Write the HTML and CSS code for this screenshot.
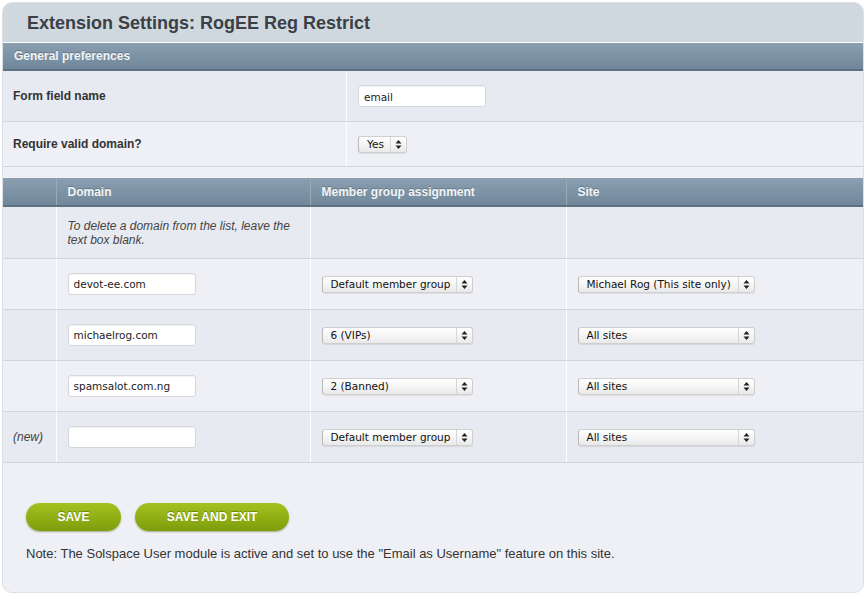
FILE: index.html
```html
<!DOCTYPE html>
<html>
<head>
<meta charset="utf-8">
<title>Extension Settings: RogEE Reg Restrict</title>
<link rel="stylesheet" href="styles.css">
</head>
<body>
<div class="panel">
  <h1 class="title">Extension Settings: RogEE Reg Restrict</h1>
  <div class="section-bar">General preferences</div>

  <div class="pref-row shade">
    <div class="pref-label">Form field name</div>
    <div class="pref-value"><input class="text-input" type="text" value="email"></div>
  </div>
  <div class="pref-row pref-row-short">
    <div class="pref-label">Require valid domain?</div>
    <div class="pref-value">
      <div class="select sel-yes"><span class="sel-text">Yes</span><span class="sel-arrows"><svg width="7" height="9" viewBox="0 0 7 9"><path d="M3.5 0L6.5 3.5H0.5Z M3.5 9L6.5 5.5H0.5Z" fill="#222"/></svg></span></div>
    </div>
  </div>

  <div class="spacer"></div>

  <table class="domains">
    <thead>
      <tr>
        <th class="c-idx"></th>
        <th class="c-domain">Domain</th>
        <th class="c-group">Member group assignment</th>
        <th class="c-site">Site</th>
      </tr>
    </thead>
    <tbody>
      <tr class="shade help-row">
        <td></td>
        <td class="help">To delete a domain from the list, leave the text box blank.</td>
        <td></td>
        <td></td>
      </tr>
      <tr>
        <td></td>
        <td><input class="text-input" type="text" value="devot-ee.com"></td>
        <td><div class="select sel-group"><span class="sel-text">Default member group</span><span class="sel-arrows"><svg width="7" height="9" viewBox="0 0 7 9"><path d="M3.5 0L6.5 3.5H0.5Z M3.5 9L6.5 5.5H0.5Z" fill="#222"/></svg></span></div></td>
        <td><div class="select sel-site"><span class="sel-text">Michael Rog (This site only)</span><span class="sel-arrows"><svg width="7" height="9" viewBox="0 0 7 9"><path d="M3.5 0L6.5 3.5H0.5Z M3.5 9L6.5 5.5H0.5Z" fill="#222"/></svg></span></div></td>
      </tr>
      <tr class="shade">
        <td></td>
        <td><input class="text-input" type="text" value="michaelrog.com"></td>
        <td><div class="select sel-group"><span class="sel-text">6 (VIPs)</span><span class="sel-arrows"><svg width="7" height="9" viewBox="0 0 7 9"><path d="M3.5 0L6.5 3.5H0.5Z M3.5 9L6.5 5.5H0.5Z" fill="#222"/></svg></span></div></td>
        <td><div class="select sel-site"><span class="sel-text">All sites</span><span class="sel-arrows"><svg width="7" height="9" viewBox="0 0 7 9"><path d="M3.5 0L6.5 3.5H0.5Z M3.5 9L6.5 5.5H0.5Z" fill="#222"/></svg></span></div></td>
      </tr>
      <tr>
        <td></td>
        <td><input class="text-input" type="text" value="spamsalot.com.ng"></td>
        <td><div class="select sel-group"><span class="sel-text">2 (Banned)</span><span class="sel-arrows"><svg width="7" height="9" viewBox="0 0 7 9"><path d="M3.5 0L6.5 3.5H0.5Z M3.5 9L6.5 5.5H0.5Z" fill="#222"/></svg></span></div></td>
        <td><div class="select sel-site"><span class="sel-text">All sites</span><span class="sel-arrows"><svg width="7" height="9" viewBox="0 0 7 9"><path d="M3.5 0L6.5 3.5H0.5Z M3.5 9L6.5 5.5H0.5Z" fill="#222"/></svg></span></div></td>
      </tr>
      <tr class="shade">
        <td class="new-label">(new)</td>
        <td><input class="text-input" type="text" value=""></td>
        <td><div class="select sel-group"><span class="sel-text">Default member group</span><span class="sel-arrows"><svg width="7" height="9" viewBox="0 0 7 9"><path d="M3.5 0L6.5 3.5H0.5Z M3.5 9L6.5 5.5H0.5Z" fill="#222"/></svg></span></div></td>
        <td><div class="select sel-site"><span class="sel-text">All sites</span><span class="sel-arrows"><svg width="7" height="9" viewBox="0 0 7 9"><path d="M3.5 0L6.5 3.5H0.5Z M3.5 9L6.5 5.5H0.5Z" fill="#222"/></svg></span></div></td>
      </tr>
    </tbody>
  </table>

  <div class="actions">
    <button class="btn btn-save" type="button">SAVE</button>
    <button class="btn btn-exit" type="button">SAVE AND EXIT</button>
  </div>
  <p class="note">Note: The Solspace User module is active and set to use the "Email as Username" feature on this site.</p>
</div>
</body>
</html>
```

FILE: styles.css
```css
* { box-sizing: border-box; }

html, body {
  margin: 0;
  padding: 0;
  background: #ffffff;
}

body {
  font-family: "Liberation Sans", Arial, Helvetica, sans-serif;
  color: #333;
}

.panel {
  margin: 2px;
  width: 862px;
  height: 591px;
  background: #eff0f5;
  border: 1px solid #dcdfe4;
  border-radius: 10px;
  overflow: hidden;
}

.title {
  margin: 0;
  height: 40px;
  padding: 10px 0 0 24px;
  background: #d0d8df;
  border-bottom: 1px solid #ffffff;
  font-size: 18px;
  font-weight: bold;
  color: #3a4046;
  line-height: 20px;
}

.section-bar {
  height: 28px;
  padding: 0 0 0 11px;
  background: linear-gradient(#8aa0b1, #70869a);
  border-bottom: 2px solid #5e707d;
  color: #f2f5f7;
  font-size: 12px;
  font-weight: bold;
  line-height: 27px;
  text-shadow: 0 -1px 0 rgba(40, 55, 65, 0.35);
}

.pref-row {
  display: flex;
  height: 51px;
  border-bottom: 1px solid #d3d6dd;
  background: #eff0f5;
}

.pref-row.shade { background: #e8eaf2; }

.pref-row-short { height: 45px; }

.pref-label {
  width: 344px;
  display: flex;
  align-items: center;
  padding-left: 10px;
  border-right: 1px solid #ffffff;
  font-size: 12px;
  font-weight: bold;
  color: #333;
}

.pref-value {
  display: flex;
  align-items: center;
  padding-left: 11px;
}

.spacer { height: 11px; }

.text-input {
  width: 128px;
  height: 22px;
  margin: 0;
  padding: 1px 5px 0;
  background: #ffffff;
  border: 1px solid #d4d7dc;
  border-radius: 3px;
  box-shadow: inset 0 1px 1px rgba(0, 0, 0, 0.05);
  font-family: "DejaVu Sans", "Lucida Grande", sans-serif;
  font-size: 10.5px;
  color: #222;
  outline: none;
}

.select {
  display: inline-flex;
  align-items: center;
  height: 17px;
  background: linear-gradient(#ffffff, #f5f5f5 50%, #e9e9e9);
  border: 1px solid #cfcfcf;
  border-left-color: #b9b9b9;
  border-radius: 3px;
  box-shadow: 0 1px 1px rgba(0, 0, 0, 0.08);
  font-family: "DejaVu Sans", "Lucida Grande", sans-serif;
  font-size: 10.5px;
  color: #111;
}

.sel-text {
  flex: 1;
  padding-left: 8px;
  white-space: nowrap;
  line-height: 15px;
}

.sel-arrows {
  width: 16px;
  height: 15px;
  display: flex;
  align-items: center;
  justify-content: center;
  border-left: 1px solid #d6d6d6;
}

.sel-yes { width: 49px; }
.sel-group { width: 151px; }
.sel-site { width: 177px; }

.domains {
  width: 100%;
  border-collapse: collapse;
  table-layout: fixed;
}

.domains th {
  height: 28px;
  padding: 0 0 0 11px;
  background: linear-gradient(#8aa0b1, #70869a);
  border-bottom: 2px solid #5e707d;
  border-right: 1px solid #9aabb8;
  color: #f2f5f7;
  font-size: 12px;
  font-weight: bold;
  text-align: left;
  text-shadow: 0 -1px 0 rgba(40, 55, 65, 0.35);
}

.domains th:last-child { border-right: none; }

.c-idx { width: 53px; }
.c-domain { width: 254px; }
.c-group { width: 256px; }

.domains td {
  height: 51px;
  padding: 0 0 0 11px;
  background: #eff0f5;
  border-bottom: 1px solid #d3d6dd;
  border-right: 1px solid #ffffff;
  vertical-align: middle;
}

.domains td:last-child { border-right: none; }

.domains tr.shade td { background: #e8eaf2; }

.domains .help-row td {
  height: 52px;
  vertical-align: top;
  padding-top: 12px;
}

.help {
  font-size: 12px;
  font-style: italic;
  color: #444;
  line-height: 14px;
  padding-right: 10px;
}

.new-label {
  font-size: 12px;
  font-style: italic;
  color: #444;
  padding-left: 10px !important;
}

.actions {
  display: flex;
  gap: 14px;
  padding: 40px 0 0 23px;
}

.btn {
  height: 28px;
  padding: 0;
  border: none;
  border-radius: 14px;
  background: linear-gradient(#a4c11f, #8fae14 55%, #7d9c0d);
  box-shadow: 0 1px 2px rgba(60, 80, 0, 0.45);
  color: #ffffff;
  font-family: "Liberation Sans", Arial, sans-serif;
  font-size: 12px;
  font-weight: bold;
  text-shadow: 0 -1px 0 rgba(70, 90, 0, 0.5);
  cursor: pointer;
}

.btn-save { width: 95px; }
.btn-exit { width: 154px; }

.note {
  margin: 15px 0 0 23px;
  font-size: 13px;
  color: #333;
}
```
